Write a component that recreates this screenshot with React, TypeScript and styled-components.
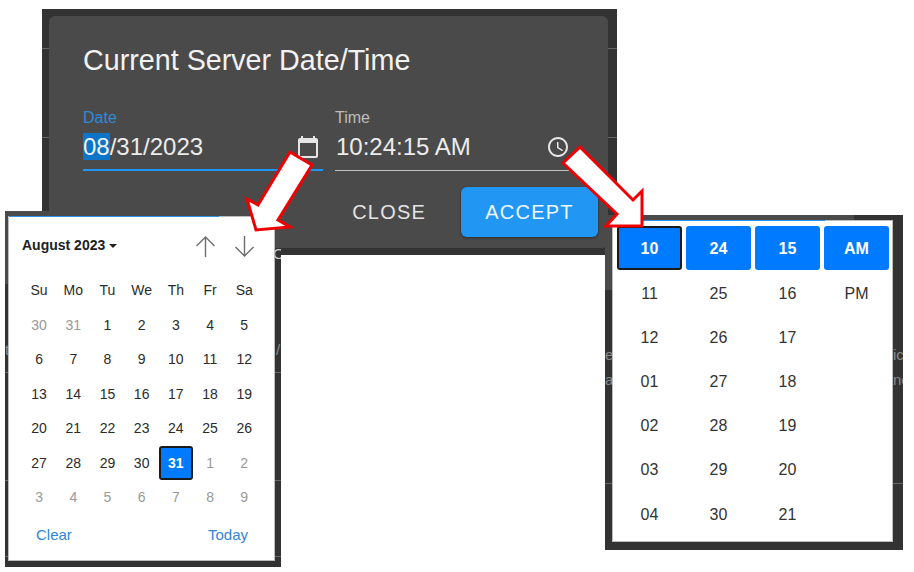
import styled, { createGlobalStyle } from "styled-components";

const GlobalStyle = createGlobalStyle`
  html, body {
    margin: 0;
    padding: 0;
    background: #fff;
  }
  body {
    font-family: "Liberation Sans", Arial, sans-serif;
  }
`;

// slide canvas, the three windows are pasted on it freely
const Canvas = styled.div`
  position: relative;
  width: 914px;
  height: 572px;
  overflow: hidden;
  background: #fff;
`;

const DialogBackdrop = styled.div`
  position: absolute;
  left: 42px;
  top: 9px;
  width: 575px;
  height: 246px;
  box-sizing: border-box;
  padding: 7px 9px 7px 7px;
  background:
    linear-gradient(#666, #666) 0 39px / 100% 1px no-repeat,
    linear-gradient(#666, #666) 0 128px / 100% 1px no-repeat,
    #333;
`;

const Dialog = styled.div`
  height: 232px;
  box-sizing: border-box;
  padding: 27px 10px 11px 34px;
  display: flex;
  flex-direction: column;
  background: #4a4a4a;
  border-radius: 6px;
`;

const Title = styled.h2`
  margin: 0;
  font-size: 28.7px;
  line-height: 34px;
  font-weight: 400;
  color: #f2f2f2;
`;

const Fields = styled.div`
  display: grid;
  grid-template-columns: 240px 244px;
  column-gap: 12px;
  margin-top: 32px;
`;

const Field = styled.div<{ $focused?: boolean }>`
  height: 62px;
  box-sizing: border-box;
  border-bottom: ${(p) => (p.$focused ? "2px solid #2196f3" : "1px solid #c4c4c4")};
  display: flex;
  flex-direction: column;
`;

const FieldLabel = styled.label<{ $focused?: boolean }>`
  font-size: 16px;
  line-height: 18px;
  color: ${(p) => (p.$focused ? "#2e8bd6" : "#bdbdbd")};
`;

const FieldRow = styled.div<{ $inset: number }>`
  display: flex;
  align-items: center;
  justify-content: space-between;
  padding-right: ${(p) => p.$inset}px;
  margin-top: 4px;
  height: 30px;
`;

const FieldValue = styled.span<{ $nudge?: boolean }>`
  font-size: 24px;
  line-height: 27px;
  color: #ececec;
  padding-left: ${(p) => (p.$nudge ? "1px" : "0")};
`;

const Selected = styled.span`
  background: #0a75c9;
  color: #f2f2f2;
`;

const FieldIcon = styled.svg`
  width: 24px;
  height: 24px;
  fill: #e6e6e6;
  margin-top: 1px;
`;

const Actions = styled.div`
  display: flex;
  justify-content: flex-end;
  align-items: center;
  gap: 35px;
  margin-top: 16px;
`;

const TextButton = styled.button`
  border: 0;
  padding: 0;
  background: none;
  font-family: "Liberation Sans", Arial, sans-serif;
  font-size: 20px;
  font-weight: 400;
  letter-spacing: 1.2px;
  color: #e4e4e4;
`;

const PrimaryButton = styled(TextButton)`
  width: 137px;
  height: 50px;
  border-radius: 6px;
  background: #2196f3;
  color: #f0f6fb;
  box-shadow: 0 1px 3px rgba(0, 0, 0, 0.4);
`;

const PopupFrame = styled.div<{
  $left: number;
  $top: number;
  $width: number;
  $height: number;
  $pad: string;
  $split: number;
  $rightWidth: number;
  $rightSplit: number;
}>`
  position: absolute;
  left: ${(p) => p.$left}px;
  top: ${(p) => p.$top}px;
  width: ${(p) => p.$width}px;
  height: ${(p) => p.$height}px;
  box-sizing: border-box;
  padding: ${(p) => p.$pad};
  overflow: hidden;
  background:
    linear-gradient(#333, #333) right bottom / ${(p) => p.$rightWidth}px calc(100% - ${(p) => p.$rightSplit}px) no-repeat,
    linear-gradient(#4a4a4a ${(p) => p.$split}px, #333 ${(p) => p.$split}px);
`;

// table behind the popup, only its edges stay visible
const BehindLine = styled.div<{ $top: number }>`
  position: absolute;
  left: 0;
  right: 0;
  top: ${(p) => p.$top}px;
  height: 1px;
  background: #666;
`;

const BehindText = styled.span<{ $top: number; $left: number; $light?: boolean }>`
  position: absolute;
  top: ${(p) => p.$top}px;
  left: ${(p) => p.$left}px;
  font-size: 15px;
  line-height: 16px;
  color: ${(p) => (p.$light ? "#c8c8c8" : "#8a8a8a")};
`;

const Popup = styled.div`
  position: relative;
  height: 100%;
  box-sizing: border-box;
  background: #fff;
  box-shadow: 0 0 0 1px #bdbdbd;
`;

const PopupAccent = styled.div<{ $width: number }>`
  position: absolute;
  left: 0;
  top: -1px;
  width: ${(p) => p.$width}px;
  height: 1px;
  background: #2e95e8;
`;

const CalendarPopup = styled(Popup)`
  padding: 0 13px;
  display: flex;
  flex-direction: column;
`;

const CalendarHeader = styled.div`
  height: 56px;
  display: flex;
  align-items: center;
  justify-content: space-between;
`;

const MonthButton = styled.div`
  display: flex;
  align-items: center;
  gap: 4px;
  font-size: 14px;
  font-weight: 700;
  color: #222;
`;

const Caret = styled.span`
  width: 0;
  height: 0;
  margin-top: 1px;
  border-left: 4px solid transparent;
  border-right: 4px solid transparent;
  border-top: 4px solid #222;
`;

const ArrowGroup = styled.div`
  display: flex;
  gap: 16px;
  padding-right: 5px;
  margin-top: 3px;
`;

const StepIcon = styled.svg`
  width: 23px;
  height: 23px;
  fill: none;
  stroke: #6e6e6e;
  stroke-width: 1.4;
`;

const DayGrid = styled.div`
  display: grid;
  grid-template-columns: repeat(7, 34.2px);
  grid-auto-rows: 34.5px;
`;

const DayCell = styled.div<{ $muted?: boolean; $active?: boolean }>`
  display: flex;
  align-items: center;
  justify-content: center;
  box-sizing: border-box;
  font-size: 14px;
  color: ${(p) => (p.$active ? "#fff" : p.$muted ? "#999" : "#2b2b2b")};
  font-weight: ${(p) => (p.$active ? 700 : 400)};
  background: ${(p) => (p.$active ? "#007bff" : "transparent")};
  border: ${(p) => (p.$active ? "2px solid #1a1a1a" : "0")};
  border-radius: ${(p) => (p.$active ? "3px" : "0")};
`;

const CalendarFooter = styled.div`
  display: flex;
  justify-content: space-between;
  padding: 11px 13px 0 14px;
`;

const LinkButton = styled.span`
  font-size: 15px;
  line-height: 17px;
  color: #2f86dc;
`;

const TimePopup = styled(Popup)`
  padding: 5px 4px 0 4px;
`;

const TimeGrid = styled.div`
  display: grid;
  grid-template-columns: repeat(4, 65px);
  grid-auto-rows: 44.2px;
  column-gap: 4px;
`;

const TimeCell = styled.div<{ $active?: boolean; $focused?: boolean }>`
  height: 44px;
  box-sizing: border-box;
  display: flex;
  align-items: center;
  justify-content: center;
  padding-top: ${(p) => (p.$active ? "1px" : "3px")};
  font-size: 16px;
  font-weight: ${(p) => (p.$active ? 700 : 400)};
  color: ${(p) => (p.$active ? "#fff" : "#333")};
  background: ${(p) => (p.$active ? "#007bff" : "transparent")};
  border: ${(p) => (p.$focused ? "2px solid #1a1a1a" : "0")};
  border-radius: ${(p) => (p.$active ? "3px" : "0")};
`;

const CalloutArrow = styled.svg`
  position: absolute;
  left: 0;
  top: 0;
  width: 914px;
  height: 572px;
  pointer-events: none;
`;

const weekdays = ["Su", "Mo", "Tu", "We", "Th", "Fr", "Sa"];

const days: { d: number; muted?: boolean }[] = [
  { d: 30, muted: true },
  { d: 31, muted: true },
  ...Array.from({ length: 31 }, (_, i) => ({ d: i + 1 })),
  ...Array.from({ length: 9 }, (_, i) => ({ d: i + 1, muted: true })),
];

const timeRows = [
  ["10", "24", "15", "AM"],
  ["11", "25", "16", "PM"],
  ["12", "26", "17", ""],
  ["01", "27", "18", ""],
  ["02", "28", "19", ""],
  ["03", "29", "20", ""],
  ["04", "30", "21", ""],
];

export default function App() {
  return (
    <Canvas>
      <GlobalStyle />

      <DialogBackdrop>
        <Dialog>
          <Title>Current Server Date/Time</Title>
          <Fields>
            <Field $focused>
              <FieldLabel $focused>Date</FieldLabel>
              <FieldRow $inset={3}>
                <FieldValue>
                  <Selected>08</Selected>/31/2023
                </FieldValue>
                <FieldIcon viewBox="0 0 24 24">
                  <path d="M20 3h-1V1h-2v2H7V1H5v2H4c-1.1 0-2 .9-2 2v16c0 1.1.9 2 2 2h16c1.1 0 2-.9 2-2V5c0-1.1-.9-2-2-2zm0 18H4V8h16v13z" />
                </FieldIcon>
              </FieldRow>
            </Field>
            <Field>
              <FieldLabel>Time</FieldLabel>
              <FieldRow $inset={9}>
                <FieldValue $nudge>10:24:15 AM</FieldValue>
                <FieldIcon viewBox="0 0 24 24">
                  <path d="M11.99 2C6.47 2 2 6.48 2 12s4.47 10 9.99 10C17.52 22 22 17.52 22 12S17.52 2 11.99 2zM12 20c-4.42 0-8-3.58-8-8s3.58-8 8-8 8 3.58 8 8-3.58 8-8 8z" />
                  <path d="M12.5 7H11v6l5.25 3.15.75-1.23-4.5-2.67z" />
                </FieldIcon>
              </FieldRow>
            </Field>
          </Fields>
          <Actions>
            <TextButton>CLOSE</TextButton>
            <PrimaryButton>ACCEPT</PrimaryButton>
          </Actions>
        </Dialog>
      </DialogBackdrop>

      <PopupFrame
        $left={5}
        $top={211}
        $width={276}
        $height={356}
        $pad="6px 7px 7px 4px"
        $split={73}
        $rightWidth={100}
        $rightSplit={37}
      >
        <BehindLine $top={161} />
        <BehindLine $top={269} />
        <BehindLine $top={345} />
        <BehindText $top={131} $left={0}>t</BehindText>
        <BehindText $top={131} $left={271}>/</BehindText>
        <BehindText $top={35} $left={268} $light>O</BehindText>
        <CalendarPopup>
          <PopupAccent $width={210} />
          <CalendarHeader>
            <MonthButton>
              August 2023
              <Caret />
            </MonthButton>
            <ArrowGroup>
              <StepIcon viewBox="0 0 23 23">
                <path d="M11.5 22V2M2.5 11l9-9 9 9" />
              </StepIcon>
              <StepIcon viewBox="0 0 23 23">
                <path d="M11.5 1v20M2.5 12l9 9 9-9" />
              </StepIcon>
            </ArrowGroup>
          </CalendarHeader>
          <DayGrid>
            {weekdays.map((w) => (
              <DayCell key={w}>{w}</DayCell>
            ))}
            {days.map((item, i) => (
              <DayCell key={i} $muted={item.muted} $active={!item.muted && item.d === 31}>
                {item.d}
              </DayCell>
            ))}
          </DayGrid>
          <CalendarFooter>
            <LinkButton>Clear</LinkButton>
            <LinkButton>Today</LinkButton>
          </CalendarFooter>
        </CalendarPopup>
      </PopupFrame>

      <PopupFrame
        $left={605}
        $top={215}
        $width={298}
        $height={335}
        $pad="6px 11px 9px 8px"
        $split={75}
        $rightWidth={49}
        $rightSplit={0}
      >
        <BehindLine $top={268} />
        <BehindText $top={132} $left={0}>e</BehindText>
        <BehindText $top={157} $left={0}>a</BehindText>
        <BehindText $top={132} $left={288}>ic</BehindText>
        <BehindText $top={157} $left={288}>ne</BehindText>
        <TimePopup>
          <PopupAccent $width={212} />
          <TimeGrid>
            {timeRows.flat().map((value, i) => (
              <TimeCell key={i} $active={i < 4} $focused={i === 0}>
                {value}
              </TimeCell>
            ))}
          </TimeGrid>
        </TimePopup>
      </PopupFrame>

      <CalloutArrow viewBox="0 0 914 572">
        <polygon
          points="290,152 312,165 278,220 290,227 256,230 247,199 258,205"
          fill="#fff"
          stroke="#f00000"
          strokeWidth="3"
        />
        <polygon
          points="580,147 563,163 617,214 606,226 642,226 642,191 633,200"
          fill="#fff"
          stroke="#f00000"
          strokeWidth="3"
        />
      </CalloutArrow>
    </Canvas>
  );
}
